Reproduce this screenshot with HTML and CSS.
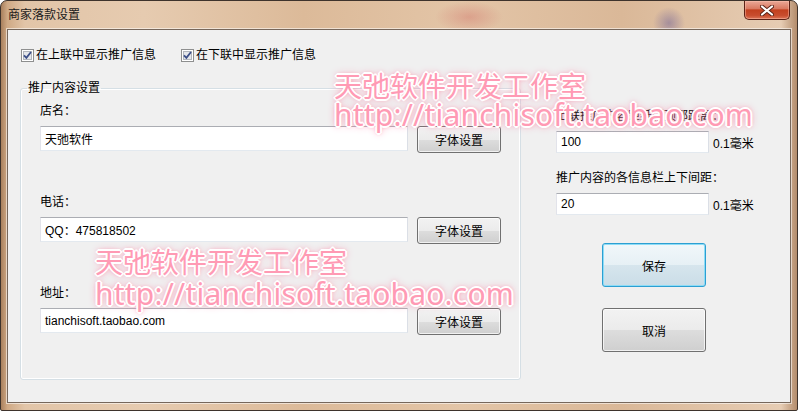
FILE: index.html
```html
<!DOCTYPE html>
<html lang="zh-CN">
<head>
    <meta charset="UTF-8">
    <title>商家落款设置</title>
    <link rel="stylesheet" href="styles.css">
</head>
<body>
    <div class="window">
        <div class="titlebar">
            <span class="title">商家落款设置</span>
            <div class="close-btn">
                <svg width="14" height="11" viewBox="0 0 14 11">
                    <path d="M2 1.5 L12 9.5 M12 1.5 L2 9.5" stroke="#5a2418" stroke-width="4" stroke-linecap="round"/>
                    <path d="M2 1.5 L12 9.5 M12 1.5 L2 9.5" stroke="#fff" stroke-width="2.2" stroke-linecap="round"/>
                </svg>
            </div>
        </div>

        <div class="client">
            <div class="checks">
                <label class="check">
                    <svg class="checkbox" width="13" height="13" viewBox="0 0 13 13">
                        <rect x="0.5" y="0.5" width="12" height="12" fill="#fff" stroke="#8e8f8f"/>
                        <rect x="2.5" y="2.5" width="8" height="8" fill="#e4e6ea" stroke="#b2b6bc"/>
                        <path d="M3 6.3 L5.4 8.8 L10 3" fill="none" stroke="#3c4f88" stroke-width="1.8"/>
                    </svg>
                    在上联中显示推广信息
                </label>
                <label class="check">
                    <svg class="checkbox" width="13" height="13" viewBox="0 0 13 13">
                        <rect x="0.5" y="0.5" width="12" height="12" fill="#fff" stroke="#8e8f8f"/>
                        <rect x="2.5" y="2.5" width="8" height="8" fill="#e4e6ea" stroke="#b2b6bc"/>
                        <path d="M3 6.3 L5.4 8.8 L10 3" fill="none" stroke="#3c4f88" stroke-width="1.8"/>
                    </svg>
                    在下联中显示推广信息
                </label>
            </div>

            <div class="main">
                <fieldset class="group">
                    <legend>推广内容设置</legend>
                    <div class="group-body">
                        <div class="field">
                            <div class="field-label">店名：</div>
                            <div class="field-row">
                                <div class="textbox wide">天弛软件</div>
                                <button class="btn font-btn">字体设置</button>
                            </div>
                        </div>
                        <div class="field">
                            <div class="field-label">电话：</div>
                            <div class="field-row">
                                <div class="textbox wide">QQ：475818502</div>
                                <button class="btn font-btn">字体设置</button>
                            </div>
                        </div>
                        <div class="field">
                            <div class="field-label">地址：</div>
                            <div class="field-row">
                                <div class="textbox wide">tianchisoft.taobao.com</div>
                                <button class="btn font-btn">字体设置</button>
                            </div>
                        </div>
                    </div>
                </fieldset>

                <div class="side">
                    <div class="field-label">上联推广内容距纸张顶部距离：</div>
                    <div class="unit-row">
                        <div class="textbox narrow">100</div>
                        <span class="unit">0.1毫米</span>
                    </div>
                    <div class="field-label second">推广内容的各信息栏上下间距：</div>
                    <div class="unit-row">
                        <div class="textbox narrow">20</div>
                        <span class="unit">0.1毫米</span>
                    </div>
                    <button class="btn big default">保存</button>
                    <button class="btn big cancel">取消</button>
                </div>
            </div>
        </div>
    </div>

    <!-- watermark overlay -->
    <div class="wm wm-cn wm1">天弛软件开发工作室</div>
    <div class="wm wm-url wm2">http://tianchisoft.taobao.com</div>
    <div class="wm wm-cn wm3">天弛软件开发工作室</div>
    <div class="wm wm-url wm4">http://tianchisoft.taobao.com</div>
</body>
</html>
```

FILE: styles.css
```css
html, body {
    margin: 0;
}
body {
    width: 798px;
    height: 411px;
    overflow: hidden;
    position: relative;
    font-family: "Liberation Sans", "Noto Sans CJK SC", sans-serif;
    font-size: 12px;
    color: #000;
}

.window {
    height: 411px;
    box-sizing: border-box;
    display: flex;
    flex-direction: column;
    border: 1px solid #3e332c;
    border-radius: 7px 7px 2px 2px;
    background:
        radial-gradient(ellipse 34px 16px at 468px 16px, rgba(205, 95, 90, 0.35), transparent),
        radial-gradient(ellipse 16px 16px at 668px 22px, rgba(110, 95, 150, 0.5), transparent),
        linear-gradient(90deg, #a9805d 0, #cfa985 0.8%, #e2c5a8 3%, #e6cbb0 18%, #dcba99 38%, #e3c5a7 58%, #dab898 78%, #e6ccb3 98%, #b38c6c 100%);
}

.titlebar {
    height: 28px;
    display: flex;
    align-items: flex-start;
    flex-shrink: 0;
}
.title {
    margin: 7px 0 0 7px;
    line-height: 14px;
    color: #1a1a1a;
}
.close-btn {
    margin-left: auto;
    margin-right: 7px;
    width: 46px;
    height: 19px;
    box-sizing: border-box;
    border: 1px solid #5b2116;
    border-top: none;
    border-radius: 0 0 5px 5px;
    background: linear-gradient(#eaa897 0%, #d97a62 42%, #c2401f 50%, #c84d2e 80%, #dc7558 100%);
    box-shadow: inset 0 0 0 1px rgba(255, 200, 180, 0.45);
    display: flex;
    align-items: center;
    justify-content: center;
}

.client {
    flex: 1;
    margin: 0 6px 7px 6px;
    background: #f0f0f0;
    border: 1px solid #76675b;
    box-shadow: 0 0 0 1px rgba(255, 255, 255, 0.55);
    padding-top: 18px;
}

.checks {
    display: flex;
    gap: 25px;
    margin-left: 13px;
    line-height: 14px;
}
.check {
    display: flex;
    align-items: center;
    gap: 2px;
}
.checkbox {
    display: block;
}

.main {
    display: flex;
    margin-top: 19px;
}

.group {
    margin: 0 0 0 12px;
    width: 501px;
    height: 299px;
    box-sizing: border-box;
    padding: 9px 18px 0 6px;
    border: 1px solid #d5dfe5;
    border-radius: 3px;
    box-shadow: inset 0 0 0 1px #fff;
    min-inline-size: 0;
}
.group legend {
    padding: 0 1px;
    line-height: 14px;
}
.group-body {
    padding-left: 13px;
}

.field {
    margin-bottom: 42px;
}
.field-label {
    line-height: 14px;
    margin-bottom: 8px;
}
.field-row {
    display: flex;
    align-items: flex-start;
    gap: 9px;
}

.textbox {
    box-sizing: border-box;
    background: #fff;
    border: 1px solid;
    border-color: #abadb3 #dbdfe6 #e3e9ef #e2e3ea;
    padding-left: 4px;
    display: flex;
    align-items: center;
}
.textbox.wide {
    width: 368px;
    height: 25px;
}
.textbox.narrow {
    width: 153px;
    height: 22px;
}

.btn {
    font-family: inherit;
    font-size: 12px;
    color: #000;
    box-sizing: border-box;
    border: 1px solid #707070;
    border-radius: 3px;
    background: linear-gradient(#f2f2f2 0%, #ebebeb 50%, #dddddd 51%, #cfcfcf 100%);
    box-shadow: inset 0 0 0 1px rgba(255, 255, 255, 0.7);
    padding: 0;
}
.font-btn {
    width: 84px;
    height: 27px;
}

.side {
    margin-left: 35px;
    padding-top: 28px;
    display: flex;
    flex-direction: column;
    align-items: flex-start;
}
.field-label.second {
    margin-top: 18px;
}
.unit-row {
    display: flex;
    align-items: center;
    gap: 4px;
}
.btn.big {
    width: 104px;
    height: 44px;
    margin-left: 46px;
}
.btn.default {
    margin-top: 28px;
    border-color: #2d9fd2;
    background: linear-gradient(#f1f7fa 0%, #e6f0f5 50%, #d6e5ed 51%, #cadde7 100%);
    box-shadow: inset 0 0 0 1px #8ddcf6;
}
.btn.cancel {
    margin-top: 21px;
}

/* watermark */
.wm {
    position: absolute;
    white-space: nowrap;
    line-height: 1;
    color: #ff9ab4;
    text-shadow:
        1px 0 #fff, -1px 0 #fff, 0 1px #fff, 0 -1px #fff,
        1px 1px #fff, -1px -1px #fff, 1px -1px #fff, -1px 1px #fff,
        2px 0 #fff, -2px 0 #fff, 0 2px #fff, 0 -2px #fff,
        0 0 4px #ff7a9c, 0 0 8px #ff8fac;
}
.wm-cn {
    font-family: "Noto Sans CJK SC", sans-serif;
    font-size: 28px;
}
.wm-url {
    font-family: "Noto Sans", sans-serif;
    font-size: 30px;
    letter-spacing: 0.2px;
}
.wm1 {
    left: 334px;
    top: 71px;
}
.wm2 {
    left: 334px;
    top: 100px;
}
.wm3 {
    left: 95px;
    top: 247px;
}
.wm4 {
    left: 95px;
    top: 279px;
}
```
